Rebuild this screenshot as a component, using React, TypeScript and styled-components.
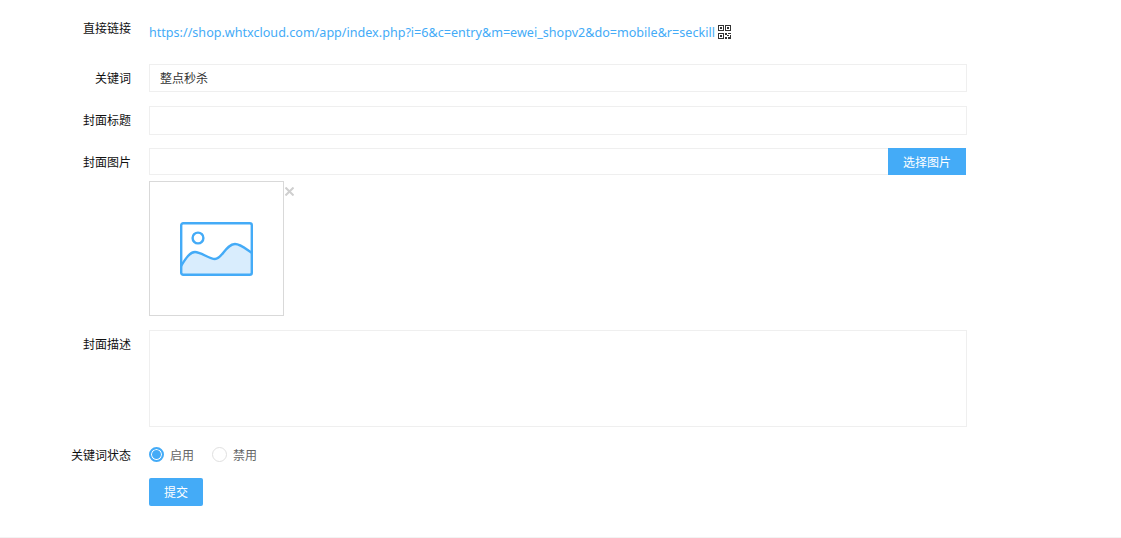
import React from 'react';
import styled, { createGlobalStyle } from 'styled-components';

const GlobalStyle = createGlobalStyle`
  html, body {
    margin: 0;
    padding: 0;
    background: #fff;
  }

  body {
    font-family: "Noto Sans", "Noto Sans CJK SC", sans-serif;
    font-size: 12px;
    color: #333;
  }
`;

const Page = styled.div`
  width: 1121px;
  height: 538px;
  box-sizing: border-box;
  border-bottom: 1px solid #f3f3f3;
  overflow: hidden;
  padding-top: 18px;
`;

const Row = styled.div<{ $height: number; $gap: number }>`
  display: flex;
  align-items: flex-start;
  min-height: ${(p) => p.$height}px;
  margin-bottom: ${(p) => p.$gap}px;
`;

const Label = styled.label<{ $top?: number }>`
  flex: none;
  width: 131px;
  margin-right: 18px;
  padding-top: ${(p) => p.$top ?? 6}px;
  text-align: right;
  font-size: 12px;
  line-height: 17px;
  color: #111;
`;

const Field = styled.div`
  width: 818px;
`;

const LinkLine = styled.div`
  display: flex;
  align-items: center;
  height: 28px;
`;

const Url = styled.a`
  font-size: 12.58px;
  color: #44abf7;
  text-decoration: none;
  white-space: nowrap;
`;

const QrIcon = styled.svg`
  display: block;
  margin-left: 3px;
`;

const TextInput = styled.div<{ $height: number }>`
  box-sizing: border-box;
  width: 100%;
  height: ${(p) => p.$height}px;
  border: 1px solid #efefef;
  padding: 1px 10px 0;
  line-height: ${(p) => p.$height - 3}px;
  font-size: 12px;
  color: #333;
`;

const InputGroup = styled.div`
  display: flex;
  width: 817px;
  height: 27px;
`;

const GroupInput = styled.div`
  flex: 1;
  box-sizing: border-box;
  border: 1px solid #efefef;
  border-right: 0;
`;

const AddonButton = styled.button`
  width: 78px;
  border: 0;
  padding: 0;
  background: #44abf7;
  color: #fff;
  font: inherit;
`;

const Thumb = styled.div`
  position: relative;
  box-sizing: border-box;
  display: flex;
  align-items: center;
  justify-content: center;
  width: 135px;
  height: 135px;
  margin-top: 6px;
  border: 1px solid #d9d9d9;
`;

const RemoveMark = styled.svg`
  position: absolute;
  top: 5px;
  left: 135px;
`;

const RadioGroup = styled.div`
  display: flex;
  align-items: center;
  height: 15px;
`;

const RadioItem = styled.span`
  display: flex;
  align-items: center;
  margin-right: 18px;
  color: #666;
`;

const RadioDot = styled.i<{ $on?: boolean }>`
  box-sizing: border-box;
  width: 15px;
  height: 15px;
  margin-right: 6px;
  border-radius: 50%;
  border: ${(p) => (p.$on ? '2px solid #44abf7' : '1px solid #e0e0e0')};
  background: ${(p) => (p.$on ? '#44abf7' : '#fff')};
  box-shadow: ${(p) => (p.$on ? 'inset 0 0 0 1px #fff' : 'none')};
`;

const SubmitButton = styled.button`
  display: block;
  width: 54px;
  height: 28px;
  border: 0;
  border-radius: 2px;
  padding: 0;
  background: #44abf7;
  color: #fff;
  font: inherit;
`;

const hill = 'C6 36 10 30 15 30 C21 30 29 37 35 37 C42 37 46 22 55 22 C61 22 67 28 72 31';

const App = () => {
  return (
    <Page>
      <GlobalStyle />
      <Row $height={28} $gap={18}>
        <Label $top={2}>直接链接</Label>
        <LinkLine>
          <Url href="#">https://shop.whtxcloud.com/app/index.php?i=6&c=entry&m=ewei_shopv2&do=mobile&r=seckill</Url>
          <QrIcon width="13" height="14" viewBox="0 0 13 14" shapeRendering="crispEdges">
            <path
              fill="#333"
              fillRule="evenodd"
              d="M0 0h6v6H0zM1 1v4h4V1zM2 2h2v2H2zM7 0h6v6H7zM8 1v4h4V1zM9 2h2v2H9zM0 8h6v6H0zM1 9v4h4V9zM2 10h2v2H2zM7 8h2v2H7zM10 8h3v1h-3zM9 10h2v1H9zM12 10h1v2h-1zM7 12h2v2H7zM10 12h3v2h-3z"
            />
          </QrIcon>
        </LinkLine>
      </Row>
      <Row $height={28} $gap={14}>
        <Label>关键词</Label>
        <Field>
          <TextInput $height={28}>整点秒杀</TextInput>
        </Field>
      </Row>
      <Row $height={29} $gap={13}>
        <Label>封面标题</Label>
        <Field>
          <TextInput $height={29} />
        </Field>
      </Row>
      <Row $height={168} $gap={14}>
        <Label>封面图片</Label>
        <Field>
          <InputGroup>
            <GroupInput />
            <AddonButton type="button">选择图片</AddonButton>
          </InputGroup>
          <Thumb>
            <svg width="73" height="54" viewBox="0 0 73 54">
              <path d={`M1 44 ${hill} L72 52 L1 52 Z`} fill="#d9edfd" />
              <rect x="1.2" y="1.2" width="70.6" height="51.6" rx="2" fill="none" stroke="#44abf7" strokeWidth="2.4" />
              <circle cx="18" cy="16" r="5.4" fill="none" stroke="#44abf7" strokeWidth="2.4" />
              <path d={`M1 44 ${hill}`} fill="none" stroke="#44abf7" strokeWidth="2.4" />
            </svg>
            <RemoveMark width="9" height="9" viewBox="0 0 9 9">
              <path d="M0.5 0.5L8.5 8.5M8.5 0.5L0.5 8.5" stroke="#cfcfcf" strokeWidth="2" fill="none" />
            </RemoveMark>
          </Thumb>
        </Field>
      </Row>
      <Row $height={97} $gap={20}>
        <Label>封面描述</Label>
        <Field>
          <TextInput $height={97} />
        </Field>
      </Row>
      <Row $height={17} $gap={14}>
        <Label $top={0}>关键词状态</Label>
        <RadioGroup>
          <RadioItem>
            <RadioDot $on />
            启用
          </RadioItem>
          <RadioItem>
            <RadioDot />
            禁用
          </RadioItem>
        </RadioGroup>
      </Row>
      <Row $height={28} $gap={0}>
        <Label />
        <SubmitButton type="button">提交</SubmitButton>
      </Row>
    </Page>
  );
};

export default App;
